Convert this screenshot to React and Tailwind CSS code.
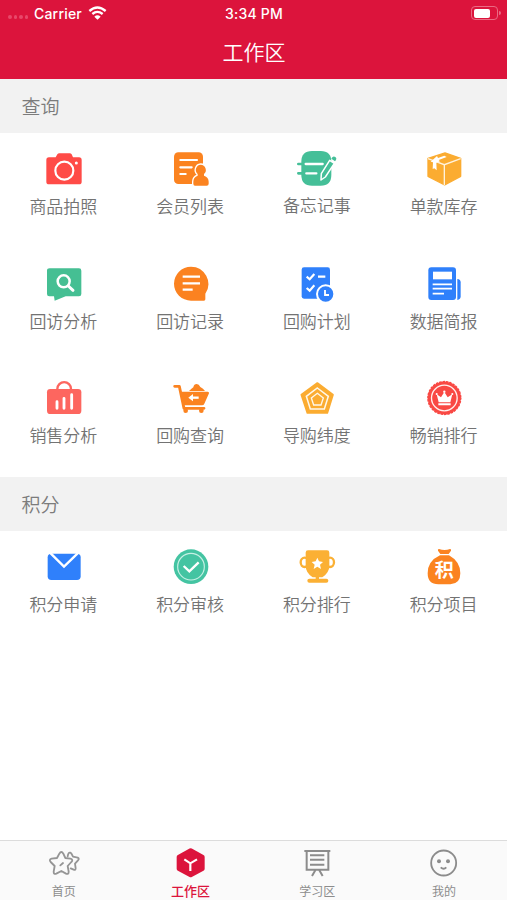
import clsx from 'clsx';

const WHITE = '#ffffff';

function Svg({ children, className = 'size-10', box = 120 }) {
  return (
    <svg viewBox={`0 0 ${box} ${box}`} className={clsx('block shrink-0', className)} fill="none">
      {children}
    </svg>
  );
}

const CameraIcon = () => (
  <Svg>
    <path fill="#ff4b47" d="M18 28h20l5-9q2-3 6-3h31q4 0 6 3l4 9h18q8 0 8 8v65q0 8-8 8H18q-8 0-8-8V36q0-8 8-8Z" />
    <circle cx="64" cy="68" r="27" stroke={WHITE} strokeWidth="6.5" />
    <circle cx="100" cy="45" r="4.5" fill={WHITE} />
  </Svg>
);

const MemberIcon = () => (
  <Svg>
    <rect x="12" y="13" width="87" height="95" rx="13" fill="#fb8320" />
    <path d="M31 36h50M31 58h34M31 78h16" stroke={WHITE} strokeWidth="6.5" strokeLinecap="round" />
    <path fill="#fb8320" stroke={WHITE} strokeWidth="8" paintOrder="stroke"
      d="M92 50a16 16 0 0 1 10 28v5q14 4 14 18v6q0 6-6 6H75q-5 0-5-6v-6q0-14 13-18v-5a16 16 0 0 1 9-28Z" />
  </Svg>
);

const MemoIcon = () => (
  <Svg>
    <path d="M4 48h14M4 76h14" stroke="#45bf98" strokeWidth="8" strokeLinecap="round" />
    <path fill="#45bf98" d="M45 9h26q32 0 32 32v40q0 32-32 32H45Q13 113 13 81V41Q13 9 45 9Z" />
    <path d="M26 48h51M28 76h30" stroke={WHITE} strokeWidth="7" strokeLinecap="round" />
    <path fill="#45bf98" stroke={WHITE} strokeWidth="4.5" strokeLinejoin="round" d="m98 37 14 9-27 41-13 9 1-19Z" />
    <path fill="#45bf98" d="m103 32 3-4q4-4 9-1t2 9l-3 4Z" />
  </Svg>
);

const BoxIcon = () => (
  <Svg>
    <path fill="#fbac31" stroke="#fbac31" strokeWidth="4" strokeLinejoin="round" d="m63 15 47 16v54l-48 26-50-26V31Z" />
    <path d="m12 32 49 18 49-18M61 50v62" stroke="#fff2dc" strokeWidth="4" />
    <path fill={WHITE} d="m20 41 19-17 3 6 19-7 7 4-24 9 4 4-11 4 1 23-7-6-5 2 1-20Z" />
  </Svg>
);

const ChatSearchIcon = () => (
  <Svg>
    <path fill="#45bf93" d="M20 16h88q7 0 7 7v70q0 7-7 7H68l-33 13-2-13H19q-7 0-7-7V23q0-7 8-7Z" />
    <circle cx="62" cy="55" r="18" stroke={WHITE} strokeWidth="7.5" />
    <path d="m76 69 14 13" stroke={WHITE} strokeWidth="9" strokeLinecap="round" />
  </Svg>
);

const RecordIcon = () => (
  <Svg>
    <path fill="#fb8220" d="M63 11a52 52 0 0 1 43 81v17q0 4-4 4H63a51 51 0 0 1 0-102Z" />
    <path d="M38 41h52M38 61h52M38 80h30" stroke={WHITE} strokeWidth="7" />
  </Svg>
);

const PlanIcon = () => (
  <Svg>
    <rect x="14" y="13" width="85" height="94" rx="7" fill="#2f80fb" />
    <path d="m29 41 9 8 14-16M63 41h22M29 75l9 8 14-16" stroke={WHITE} strokeWidth="6.500" />
    <circle cx="86" cy="93" r="26" fill="#2f80fb" stroke={WHITE} strokeWidth="6" />
    <path d="M84 81v15h12" stroke={WHITE} strokeWidth="5.500" />
  </Svg>
);

const ReportIcon = () => (
  <Svg>
    <rect x="13" y="13" width="83" height="98" rx="9" fill="#2f80fb" />
    <path fill={WHITE} d="M27 26h57v23H27z" />
    <path d="M26 64h58M26 77h58M26 92h34" stroke={WHITE} strokeWidth="5.500" />
    <path fill="#2f80fb" d="M100 48q10 1 10 10v42q0 10-10 11Z" />
  </Svg>
);

const SalesIcon = () => (
  <Svg>
    <path d="M43 36v-3a20 20 0 0 1 41 0v3" stroke="#fd665f" strokeWidth="7" />
    <rect x="12" y="33" width="103" height="75" rx="10" fill="#fd665f" />
    <path d="M42 71v20M63 61v30M86 50v41" stroke={WHITE} strokeWidth="8.500" strokeLinecap="round" />
  </Svg>
);

const CartIcon = () => (
  <Svg>
    <path d="M14 25h14l14 66h60" stroke="#fb8320" strokeWidth="8.500" strokeLinecap="round" strokeLinejoin="round" />
    <path fill="#fb8320" d="M57 39q8-8 13-11 2-10 10-10 7 0 11 9 9 4 14 12Z" />
    <path fill="#fb8320" d="M31 41h82q5 0 4 5l-14 31q-2 5-7 5H39Z" />
    <path d="M61 59h25" stroke={WHITE} strokeWidth="7" />
    <path fill={WHITE} d="m55 59 14-11v22Z" />
    <circle cx="47" cy="98" r="7" fill="#fb8320" />
    <circle cx="94" cy="98" r="7" fill="#fb8320" />
  </Svg>
);

const PentagonIcon = () => (
  <Svg>
    <path fill="#fbac31" stroke="#fbac31" strokeWidth="5" strokeLinejoin="round" d="m61 15 47 35-17 55H31L13 50Z" />
    <path d="m61 30 33 25-12 38H40L28 55Z" stroke="#fff8ea" strokeWidth="4.5" />
    <path d="m61 46 18 14-7 21H50l-7-21Z" stroke="#fff8ea" strokeWidth="4" />
  </Svg>
);

const RankIcon = () => (
  <Svg>
    <circle cx="61" cy="60" r="49" fill="#f94944" />
    <circle cx="61" cy="60" r="49" stroke="#f94944" strokeWidth="5" strokeLinecap="round" strokeDasharray="4 6.262" />
    <circle cx="61" cy="60" r="38.5" stroke="#fff1ee" strokeWidth="4" />
    <path fill={WHITE} d="m38 49 13 9 10-16 10 16 14-9-6 24H44ZM43 76h37v6H43z" />
    <circle cx="38" cy="48" r="3" fill={WHITE} />
    <circle cx="61" cy="41" r="3.5" fill={WHITE} />
    <circle cx="85" cy="48" r="3" fill={WHITE} />
  </Svg>
);

const MailIcon = () => (
  <Svg>
    <rect x="14" y="23" width="99" height="79" rx="11" fill="#2f80fb" />
    <path d="m20 19 43 43 44-43" stroke={WHITE} strokeWidth="7" />
  </Svg>
);

const CheckIcon = () => (
  <Svg>
    <circle cx="63" cy="62" r="52" fill="#44c4a2" />
    <circle cx="63" cy="62" r="40" stroke="#c6f0e4" strokeWidth="3.5" />
    <path d="m41 60 17 16 28-27" stroke={WHITE} strokeWidth="7" />
  </Svg>
);

const TrophyIcon = () => (
  <Svg>
    <ellipse cx="23" cy="49" rx="12" ry="14" stroke="#fbb034" strokeWidth="7" />
    <ellipse cx="99" cy="49" rx="12" ry="14" stroke="#fbb034" strokeWidth="7" />
    <path fill="#fbb034" d="M33 13h57q7 0 7 7v40q0 20-21 34H47Q26 80 26 60V20q0-7 7-7Z" />
    <path d="M61 90v12" stroke="#fbb034" strokeWidth="10" />
    <path d="M37 104h51" stroke="#fbb034" strokeWidth="12" strokeLinecap="round" />
    <path fill={WHITE} d="m61 35 5 11 12 2-9 8 3 13-11-7-11 7 3-13-9-8 12-2Z" />
  </Svg>
);

const PointsBagIcon = () => (
  <div className="relative size-10">
    <Svg>
      <path fill="#fb8320" d="M45 9q17 6 33 0 5 0 3 5l-7 10H49l-7-10q-2-5 3-5ZM48 28h27q34 19 34 54 0 32-30 33H43q-32 0-32-33 0-37 37-54Z" />
    </Svg>
    <span className="absolute left-[11px] top-[13px] text-[19px] leading-[20px] font-bold text-white">积</span>
  </div>
);

const HomeTabIcon = () => (
  <Svg className="size-9" box={108}>
    <g stroke="#959595" strokeWidth="5.5" strokeLinejoin="round" strokeLinecap="round">
      <path d="M68 34q2-13 8-11 3 1 8 12l14 3q6 3 1 8l-9 10 2 14q0 6-6 4l-9-4" />
      <path d="M43 26q6-10 12 0l6 13 15 2q10 3 3 10L68 63l3 17q0 9-8 6l-14-8-15 8q-8 3-8-6l3-17-12-12q-6-7 3-10l16-2Z" />
      <path d="m46 61 8-7" />
    </g>
  </Svg>
);

const WorkTabIcon = () => (
  <Svg className="size-9" box={108}>
    <path fill="#dc143c" stroke="#dc143c" strokeWidth="14" strokeLinejoin="round" d="m56 17 35 19v35L56 90 21 71V36Z" />
    <path d="m37 43 18 12 20-12M55 55v23" stroke={WHITE} strokeWidth="6.5" />
  </Svg>
);

const StudyTabIcon = () => (
  <Svg className="size-9" box={108}>
    <path d="M16 18h78M23 18v56h65V18M33 31h43M33 44h43M33 59h43M49 76l-10 17M61 76l10 17" stroke="#8c8c8c" strokeWidth="6" />
  </Svg>
);

const MineTabIcon = () => (
  <Svg className="size-9" box={108}>
    <circle cx="53" cy="54" r="37.5" stroke="#8c8c8c" strokeWidth="5.5" />
    <circle cx="39" cy="49" r="6" fill="#8c8c8c" />
    <circle cx="66" cy="49" r="6" fill="#8c8c8c" />
    <path d="M44 67q9 8 17 0" stroke="#8c8c8c" strokeWidth="5.5" />
  </Svg>
);

const sections = [
  {
    title: '查询',
    rows: 'grid-rows-[115px_115px_114px]',
    items: [
      { label: '商品拍照', icon: CameraIcon },
      { label: '会员列表', icon: MemberIcon },
      { label: '备忘记事', icon: MemoIcon, raised: true },
      { label: '单款库存', icon: BoxIcon },
      { label: '回访分析', icon: ChatSearchIcon },
      { label: '回访记录', icon: RecordIcon },
      { label: '回购计划', icon: PlanIcon },
      { label: '数据简报', icon: ReportIcon },
      { label: '销售分析', icon: SalesIcon, raised: true },
      { label: '回购查询', icon: CartIcon, raised: true },
      { label: '导购纬度', icon: PentagonIcon, raised: true },
      { label: '畅销排行', icon: RankIcon, raised: true },
    ],
  },
  {
    title: '积分',
    rows: 'grid-rows-[114px]',
    items: [
      { label: '积分申请', icon: MailIcon },
      { label: '积分审核', icon: CheckIcon },
      { label: '积分排行', icon: TrophyIcon },
      { label: '积分项目', icon: PointsBagIcon },
    ],
  },
];

const tabs = [
  { label: '首页', icon: HomeTabIcon },
  { label: '工作区', icon: WorkTabIcon, active: true },
  { label: '学习区', icon: StudyTabIcon },
  { label: '我的', icon: MineTabIcon },
];

function StatusBar() {
  return (
    <div className="grid h-[26px] grid-cols-3 items-center px-2 font-['Inter','Liberation_Sans',sans-serif] font-medium text-white">
      <div className="flex items-center">
        <div className="mt-2 flex w-[26px] gap-[2px]">
          {[0, 1, 2, 3].map(i => <span key={i} className="size-[3.5px] rounded-full bg-[#e8486a]" />)}
        </div>
        <span className="w-[49px] text-[14px] tracking-[0.2px]">Carrier</span>
        <svg viewBox="0 0 57 42" className="ml-[5px] h-[14px] w-[19px]" fill="none">
          <path d="M4 15q24-21 49 0M13 24q15-13 31 0" stroke={WHITE} strokeWidth="7" />
          <path fill={WHITE} d="M19 32q9-8 19 0l-9.500 9.500Z" />
        </svg>
      </div>
      <span className="pl-px text-center text-[14px] tracking-[0.2px]">3:34 PM</span>
      <div className="flex items-center justify-end -mr-[2px]">
        <div className="h-[14px] w-[27px] rounded-[4px] border border-[#ea6a83] p-[1.500px]">
          <div className="h-full w-[16px] rounded-[2px] bg-white" />
        </div>
        <div className="ml-[1px] h-[4px] w-[2px] rounded-r bg-[#ea6a83]" />
      </div>
    </div>
  );
}

function MenuItem({ item }) {
  const Icon = item.icon;
  return (
    <div className="flex flex-col items-center pt-[15px]">
      <Icon />
      <span className={clsx('text-[17px] leading-[24px] font-[350] text-[#737373]', item.raised ? 'mt-[5px]' : 'mt-[6px]')}>{item.label}</span>
    </div>
  );
}

export default function App() {
  return (
    <div className="flex h-[900px] w-[507px] flex-col overflow-hidden bg-white font-['Noto_Sans_CJK_SC',sans-serif]">
      <header className="h-[79px] bg-[#dc143c]">
        <StatusBar />
        <h1 className="pl-px text-center text-[21px] leading-[51px] font-[350] text-white">工作区</h1>
      </header>

      <main className="flex-1">
        {sections.map(section => (
          <section key={section.title}>
            <h2 className="h-[54px] bg-[#f2f2f2] pl-[21.500px] text-[19px] leading-[53px] font-[350] text-[#7c7c7c]">{section.title}</h2>
            <div className={clsx('grid grid-cols-4', section.rows)}>
              {section.items.map(item => <MenuItem key={item.label} item={item} />)}
            </div>
          </section>
        ))}
      </main>

      <nav className="grid h-[60px] grid-cols-4 border-t border-[#dcdcdc] bg-[#fafafa]">
        {tabs.map(({ label, icon: Icon, active }) => (
          <div key={label} className="flex flex-col items-center pt-1">
            <Icon />
            <span className={clsx('pl-px leading-[20px]', active ? 'text-[13px] font-medium text-[#dc143c]' : 'text-[12px] text-[#8c8c8c]')}>
              {label}
            </span>
          </div>
        ))}
      </nav>
    </div>
  );
}
